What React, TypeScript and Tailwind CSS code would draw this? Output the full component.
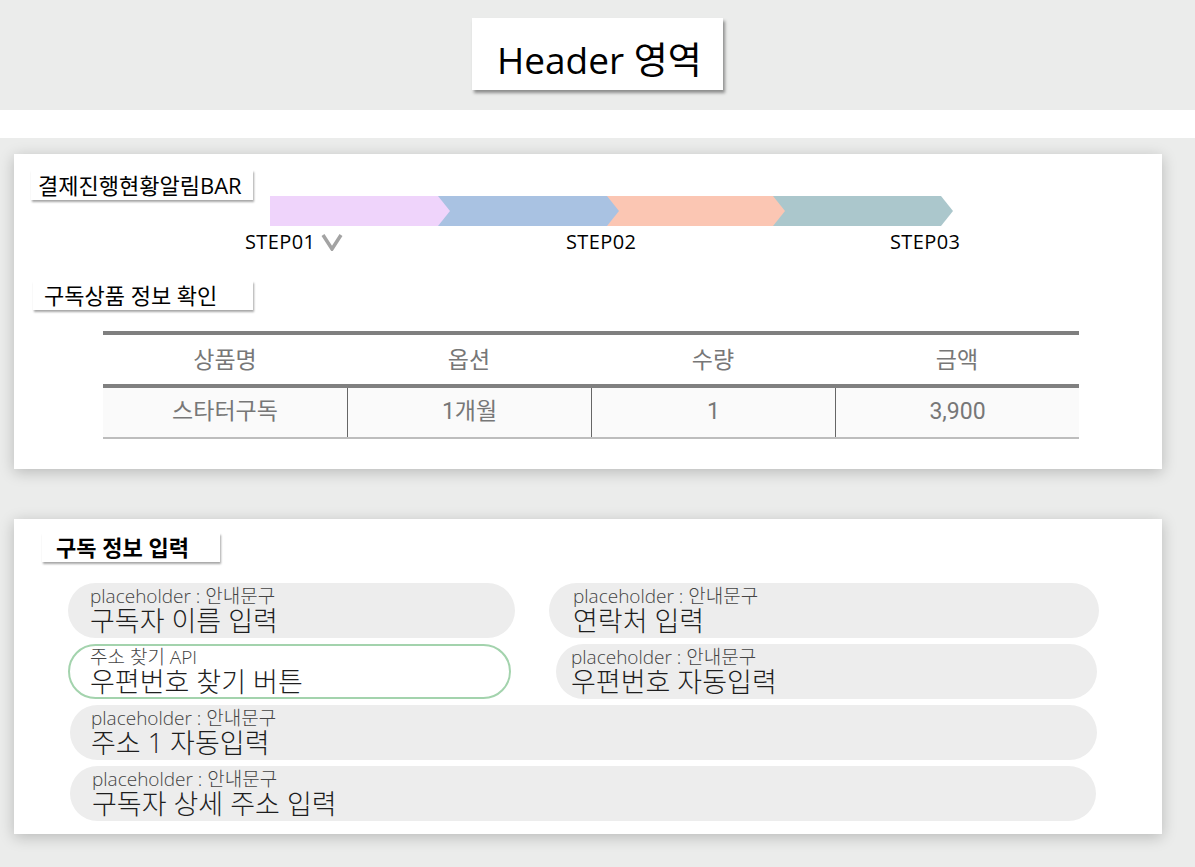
import React from "react"

const Label = (params: { text: string, className: string }) => {
    return (
        <div className={`bg-white shadow-[1px_2px_2px_rgba(0,0,0,0.35)] text-black ${params.className}`}>
            {params.text}
        </div>
    )
}

const Field = (params: { hint: string, value: string, className: string }) => {
    return (
        <div className={`h-[55px] rounded-full flex flex-col justify-center ${params.className}`}>
            <p className="text-[19px] leading-[20px] font-light text-[#444]">{params.hint}</p>
            <p className="text-[27px] leading-[29px] font-light text-[#1e1e1e]">{params.value}</p>
        </div>
    )
}

const Chevron = () => (
    <svg width="22" height="18" viewBox="0 0 22 18">
        <polyline points="2,2 11,16 20,2" fill="none" stroke="#a3a3a3" strokeWidth="3.5" strokeLinejoin="miter" />
    </svg>
)

const StepBar = () => {
    const segs = [
        { start: 503, end: 671, color: "#abc7cc" },
        { start: 337, end: 503, color: "#fbc6b3" },
        { start: 168, end: 337, color: "#a9c2e2" },
        { start: 0, end: 168, color: "#efd4fb" },
    ]
    return (
        <svg className="block ml-[239px] -mt-[4px]" width="686" height="30">
            {segs.map((s) => (
                <polygon
                    key={s.color}
                    points={`${s.start},0 ${s.end},0 ${s.end + 12},15 ${s.end},30 ${s.start},30`}
                    fill={s.color}
                />
            ))}
        </svg>
    )
}

const headers = ["상품명", "옵션", "수량", "금액"]
const row = ["스타터구독", "1개월", "1", "3,900"]

export default function App() {
    return (
        <div className="w-[1195px] min-h-[867px] bg-[#ebeceb] font-['Open_Sans','Noto_Sans_CJK_KR',sans-serif]">
            <header className="h-[110px] flex justify-center pt-[18px]">
                <div className="w-[251px] h-[72px] bg-white shadow-[2px_3px_3px_rgba(0,0,0,0.4)] flex items-center pt-[12px] pl-[25px] text-[37px] text-black">
                    Header 영역
                </div>
            </header>
            <div className="h-[28px] bg-white" />

            <main className="pl-[14px] pt-[16px] pb-[33px] flex flex-col gap-[50px]">
                <section className="w-[1148px] h-[315px] bg-white shadow-[0_3px_14px_rgba(0,0,0,0.22)] pt-[16px] pl-[17px]">
                    <Label text="결제진행현황알림BAR" className="w-[222px] h-[30px] pl-[7px] text-[22px] leading-[30px]" />
                    <StepBar />
                    <div className="ml-[214px] mt-[3px] flex items-center text-[20px] tracking-[0.4px] leading-[26px] text-black">
                        <div className="w-[321px] flex items-center gap-[6px]">
                            <span>STEP01</span>
                            <Chevron />
                        </div>
                        <div className="w-[324px]">STEP02</div>
                        <div>STEP03</div>
                    </div>

                    <Label text="구독상품 정보 확인" className="ml-[2px] mt-[26px] w-[220px] h-[29px] pl-[11px] text-[22px] leading-[29px]" />

                    <div className="ml-[72px] mt-[21px] w-[976px] border-t-[4px] border-[#7f7f7f] font-['Roboto','Noto_Sans_CJK_KR',sans-serif] text-[23px] text-[#777]">
                        <div className="grid grid-cols-4 h-[49px] items-center text-center pt-[3px]">
                            {headers.map((h) => (
                                <div key={h}>{h}</div>
                            ))}
                        </div>
                        <div className="h-[4px] bg-[#808080]" />
                        <div className="grid grid-cols-4 h-[51px] bg-[#fafafa] border-b-2 border-[#bdbdbd] text-center">
                            {row.map((c, i) => (
                                <div key={c} className={`flex items-center justify-center ${i > 0 ? "border-l border-[#666]" : ""}`}>
                                    {c}
                                </div>
                            ))}
                        </div>
                    </div>
                </section>

                <section className="w-[1148px] h-[315px] bg-white shadow-[0_3px_14px_rgba(0,0,0,0.22)] pt-[14px] pl-[28px]">
                    <Label text="구독 정보 입력" className="w-[178px] h-[29px] pl-[14px] text-[22px] leading-[29px] font-bold" />

                    <div className="ml-[26px] mt-[21px] flex flex-col gap-[6px]">
                        <div className="flex">
                            <Field hint="placeholder : 안내문구" value="구독자 이름 입력" className="w-[447px] bg-[#ededed] pl-[22px]" />
                            <Field hint="placeholder : 안내문구" value="연락처 입력" className="ml-[34px] w-[550px] bg-[#ededed] pl-[24px]" />
                        </div>
                        <div className="flex">
                            <Field hint="주소 찾기 API" value="우편번호 찾기 버튼" className="w-[443px] bg-white border-2 border-[#a3d3ad] pl-[20px]" />
                            <Field hint="placeholder : 안내문구" value="우편번호 자동입력" className="ml-[45px] w-[541px] bg-[#ededed] pl-[15px]" />
                        </div>
                        <Field hint="placeholder : 안내문구" value="주소 1 자동입력" className="ml-[2px] w-[1027px] bg-[#ededed] pl-[21px]" />
                        <Field hint="placeholder : 안내문구" value="구독자 상세 주소 입력" className="ml-[2px] w-[1026px] bg-[#ededed] pl-[22px]" />
                    </div>
                </section>
            </main>
        </div>
    )
}
